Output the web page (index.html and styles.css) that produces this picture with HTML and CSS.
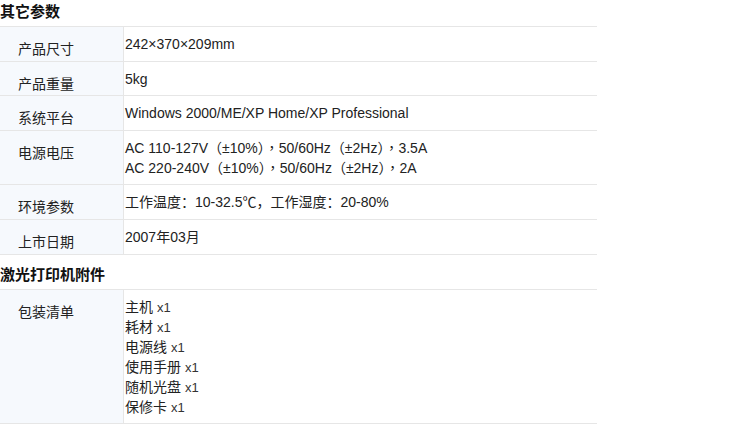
FILE: index.html
```html
<!DOCTYPE html>
<html lang="zh-CN">
<head>
    <meta charset="UTF-8">
    <title>其它参数</title>
    <link rel="stylesheet" href="styles.css">
</head>
<body>

<h3 class="param-title">其它参数</h3>
<table class="param-table">
    <colgroup>
        <col class="col-name">
        <col class="col-value">
    </colgroup>
    <tbody>
        <tr>
            <th>产品尺寸</th>
            <td>242×370×209mm</td>
        </tr>
        <tr>
            <th>产品重量</th>
            <td>5kg</td>
        </tr>
        <tr>
            <th>系统平台</th>
            <td>Windows 2000/ME/XP Home/XP Professional</td>
        </tr>
        <tr>
            <th>电源电压</th>
            <td>AC 110-127V（±10%），50/60Hz（±2Hz），3.5A<br>AC 220-240V（±10%），50/60Hz（±2Hz），2A</td>
        </tr>
        <tr>
            <th>环境参数</th>
            <td>工作温度：10-32.5℃，工作湿度：20-80%</td>
        </tr>
        <tr>
            <th>上市日期</th>
            <td>2007年03月</td>
        </tr>
    </tbody>
</table>

<h3 class="param-title">激光打印机附件</h3>
<table class="param-table">
    <colgroup>
        <col class="col-name">
        <col class="col-value">
    </colgroup>
    <tbody>
        <tr>
            <th>包装清单</th>
            <td>
                主机 <span class="qty">x1</span><br>
                耗材 <span class="qty">x1</span><br>
                电源线 <span class="qty">x1</span><br>
                使用手册 <span class="qty">x1</span><br>
                随机光盘 <span class="qty">x1</span><br>
                保修卡 <span class="qty">x1</span>
            </td>
        </tr>
    </tbody>
</table>

</body>
</html>
```

FILE: styles.css
```css
body {
    margin: 0;
    font-family: "Liberation Sans", "Noto Sans CJK SC", sans-serif;
    font-size: 14px;
    color: #222;
    background: #fff;
}

/* 分组标题 */
.param-title {
    margin: 8px 0 0 0;
    height: 22px;
    padding-bottom: 4px;
    line-height: 22px;
    font-size: 15px;
    font-weight: bold;
    font-family: "Noto Sans CJK SC", sans-serif;
    color: #111;
}

.param-title:first-child {
    margin-top: 0;
}

/* 参数表 */
.param-table {
    width: 597px;
    table-layout: fixed;
    border-collapse: separate;
    border-spacing: 0;
    border-top: 1px solid #e6e6e6;
}

.col-name {
    width: 124px;
}

.param-table th,
.param-table td {
    vertical-align: top;
    text-align: left;
    line-height: 20px;
    border-bottom: 1px solid #e6e6e6;
}

.param-table th {
    font-weight: normal;
    padding: 12px 0 1px 18px;
    background-color: #f6f9fd;
    border-right: 1px solid #e6e6e6;
}

/* 全角标点居中 */
.param-table td {
    padding: 7px 0 6.6px 1px;
    font-family: "Liberation Sans", "Noto Sans CJK TC", sans-serif;
}

.qty {
    font-size: 13px;
    line-height: 16px;
    color: #333;
}
```
